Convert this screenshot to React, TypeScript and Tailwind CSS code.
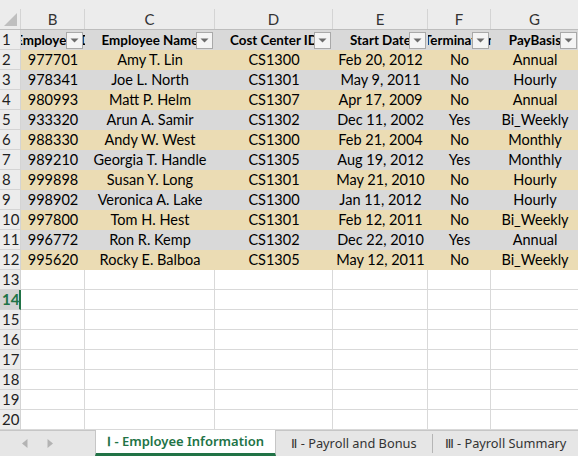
const cols = [
  { letter: "B", w: 64, head: "Employee ID" },
  { letter: "C", w: 130, head: "Employee Name" },
  { letter: "D", w: 118, head: "Cost Center ID" },
  { letter: "E", w: 95, head: "Start Date" },
  { letter: "F", w: 63, head: "Termination" },
  { letter: "G", w: 88, head: "PayBasis" },
];

const rows = [
  ["977701", "Amy T. Lin", "CS1300", "Feb 20, 2012", "No", "Annual"],
  ["978341", "Joe L. North", "CS1301", "May 9, 2011", "No", "Hourly"],
  ["980993", "Matt P. Helm", "CS1307", "Apr 17, 2009", "No", "Annual"],
  ["933320", "Arun A. Samir", "CS1302", "Dec 11, 2002", "Yes", "Bi_Weekly"],
  ["988330", "Andy W. West", "CS1300", "Feb 21, 2004", "No", "Monthly"],
  ["989210", "Georgia T. Handle", "CS1305", "Aug 19, 2012", "Yes", "Monthly"],
  ["999898", "Susan Y. Long", "CS1301", "May 21, 2010", "No", "Hourly"],
  ["998902", "Veronica A. Lake", "CS1300", "Jan 11, 2012", "No", "Hourly"],
  ["997800", "Tom H. Hest", "CS1301", "Feb 12, 2011", "No", "Bi_Weekly"],
  ["996772", "Ron R. Kemp", "CS1302", "Dec 22, 2010", "Yes", "Annual"],
  ["995620", "Rocky E. Balboa", "CS1305", "May 12, 2011", "No", "Bi_Weekly"],
];

const emptyRows = [13, 14, 15, 16, 17, 18, 19, 20];

function FilterButton() {
  return (
    <div className="absolute right-[2px] top-[2px] flex h-[17px] w-[17px] items-center justify-center border border-[#a9a9a9] bg-[#f4f4f4]">
      <svg width="9" height="5" viewBox="0 0 9 5" aria-hidden="true">
        <path d="M0.5 0.5h8L4.5 4.5Z" fill="#6b6b6b" />
      </svg>
    </div>
  );
}

function RowHead({ n, active }: { n: number; active?: boolean }) {
  return (
    <div
      className={`flex h-[20px] w-[21px] shrink-0 items-center border-b border-r border-[#d4d4d4] pl-[2px] text-[15px] leading-none ${
        active
          ? "border-r-2 border-r-[#217346] bg-[#d2d2d2] font-bold text-[#217346]"
          : "bg-[#ececec] text-[#222]"
      }`}
    >
      {n}
    </div>
  );
}

export default function App() {
  return (
    <div
      className="flex h-[456px] w-[578px] flex-col overflow-hidden bg-white"
      style={{ fontFamily: "Lato, 'Liberation Sans', sans-serif" }}
    >
      <div className="flex-1 overflow-hidden">
        {/* strip above headers */}
        <div className="h-[9px] bg-[#ececec]" />

        {/* column letters */}
        <div className="flex h-[21px] border-b border-[#bdbdbd] bg-[#ececec]">
          <div className="relative w-[21px] shrink-0 border-r border-[#d4d4d4]">
            <svg className="absolute bottom-[3px] right-[3px]" width="13" height="13" viewBox="0 0 13 13" aria-hidden="true">
              <path d="M13 0V13H0Z" fill="#bfbfbf" />
            </svg>
          </div>
          {cols.map((c) => (
            <div
              key={c.letter}
              className="flex shrink-0 items-center justify-center border-r border-[#d4d4d4] text-[15px] text-[#333]"
              style={{ width: c.w }}
            >
              {c.letter}
            </div>
          ))}
        </div>

        {/* table header row */}
        <div className="flex">
          <RowHead n={1} />
          {cols.map((c) => (
            <div
              key={c.letter}
              className="relative flex h-[20px] shrink-0 items-center justify-center overflow-hidden whitespace-nowrap bg-[#d9d9d9] text-[13.4px] font-bold text-black"
              style={{ width: c.w }}
            >
              <span>{c.head}</span>
              <FilterButton />
            </div>
          ))}
        </div>

        {/* data rows */}
        {rows.map((r, i) => (
          <div key={r[0]} className="flex">
            <RowHead n={i + 2} />
            {r.map((v, j) => (
              <div
                key={j}
                className={`flex h-[20px] shrink-0 items-center justify-center overflow-hidden whitespace-nowrap text-[14.5px] text-black ${
                  i % 2 === 0 ? "bg-[#ebdcb4]" : "bg-[#d9d9d9]"
                }`}
                style={{ width: cols[j].w }}
              >
                {v}
              </div>
            ))}
          </div>
        ))}

        {/* empty rows */}
        {emptyRows.map((n) => (
          <div key={n} className="flex">
            <RowHead n={n} active={n === 14} />
            {cols.map((c) => (
              <div
                key={c.letter}
                className="h-[20px] shrink-0 border-b border-r border-[#d9d9d9]"
                style={{ width: c.w }}
              />
            ))}
          </div>
        ))}
      </div>

      {/* sheet tabs */}
      <div
        className="flex h-[26px] shrink-0 items-stretch border-t border-[#c6c6c6] bg-[#e6e6e6] text-[12.8px]"
        style={{ fontFamily: "'Noto Sans', 'Open Sans', sans-serif" }}
      >
        <div className="flex w-[95px] items-center gap-[19px] pl-[22px]">
          <svg width="6" height="9" viewBox="0 0 6 9" aria-hidden="true">
            <path d="M5.5 0v9L0 4.5Z" fill="#b3b3b3" />
          </svg>
          <svg width="6" height="9" viewBox="0 0 6 9" aria-hidden="true">
            <path d="M0.5 0v9L6 4.5Z" fill="#b3b3b3" />
          </svg>
        </div>
        <div className="-mt-px flex w-[181px] items-center justify-center border-x border-[#c6c6c6] border-b-[3px] border-b-[#217346] bg-white text-[13px] font-semibold text-[#217346]">
          Ⅰ - Employee Information
        </div>
        <div className="flex w-[156px] items-center justify-center text-[#333]">
          <span>Ⅱ - Payroll and Bonus</span>
        </div>
        <div className="my-[3px] w-px bg-[#b5b5b5]" />
        <div className="flex flex-1 items-center justify-center text-[#333]">
          Ⅲ - Payroll Summary
        </div>
      </div>
    </div>
  );
}
